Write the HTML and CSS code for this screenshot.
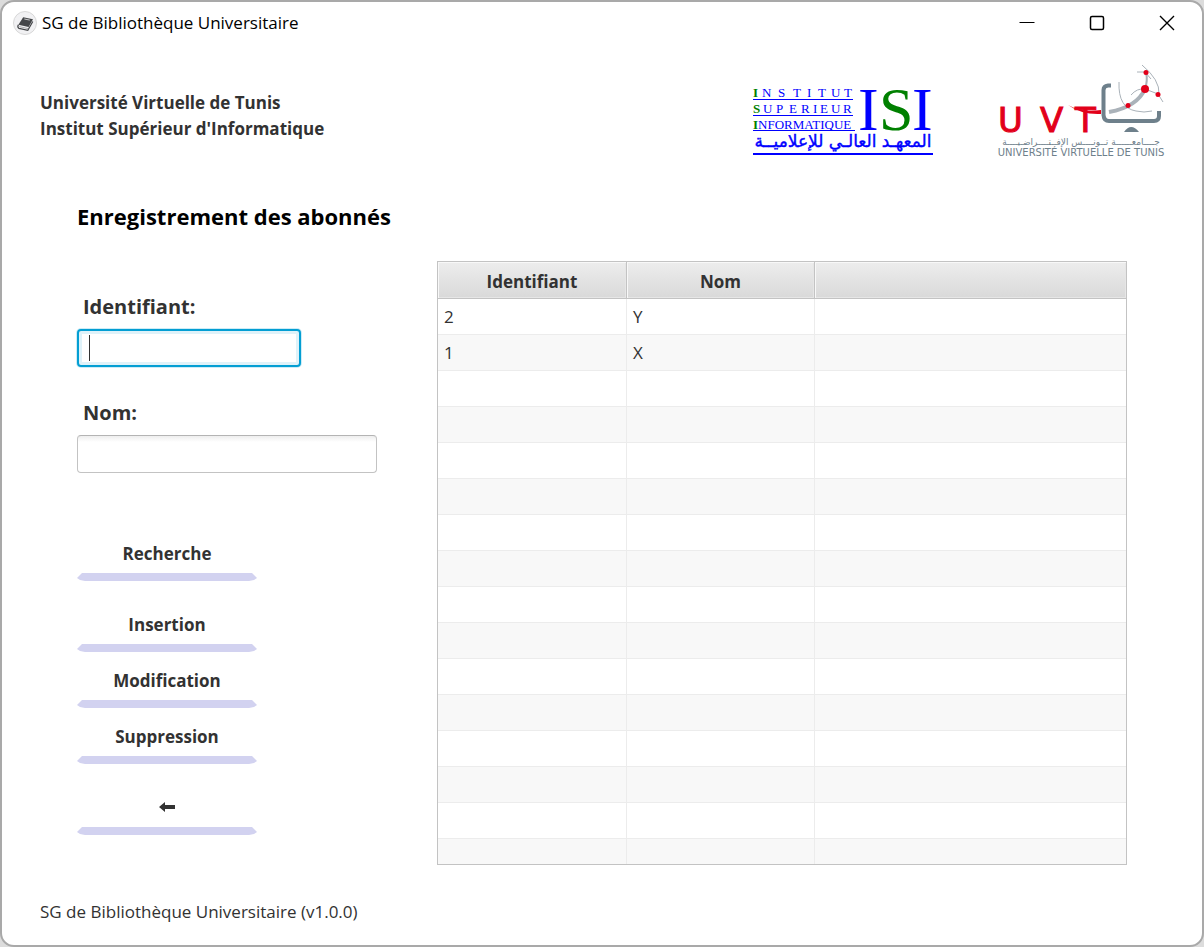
FILE: index.html
```html
<!DOCTYPE html>
<html lang="fr">
<head>
<meta charset="utf-8">
<meta name="viewport" content="width=device-width, initial-scale=1">
<title>SG de Bibliothèque Universitaire</title>
<link rel="stylesheet" href="styles.css">
</head>
<body>
<div class="window">
  <div class="titlebar">
    <svg class="app-icon" viewBox="0 0 24 24" aria-hidden="true">
      <circle cx="12" cy="12" r="11.5" fill="#f1f1f3" stroke="#d8d8d8"/>
      <path d="M10.2 6.2 20 8.2 15.6 16 5.4 13.8z" fill="#45474a"/>
      <path d="M11.3 8 16.8 9.1" stroke="#c4c4c6" fill="none"/>
      <path d="M5.4 13.8Q4 16.2 6 17.4L14.8 19.4 19.8 10.5" fill="none" stroke="#45474a" stroke-width="1.2"/>
      <path d="M6.3 15.6 15 17.6" stroke="#9a9a9c" stroke-width=".8"/>
    </svg>
    <span class="app-name">SG de Bibliothèque Universitaire</span>
    <div class="controls">
      <button class="control" type="button" aria-label="Réduire"><svg viewBox="0 0 16 16"><path d="M.5 7.500H15.500"/></svg></button>
      <button class="control" type="button" aria-label="Agrandir"><svg viewBox="0 0 16 16"><rect x="1.500" y="1.500" width="13" height="13" rx="1.500" stroke-width="1.500"/></svg></button>
      <button class="control" type="button" aria-label="Fermer"><svg viewBox="0 0 16 16"><path d="M1 1 15 15M15 1 1 15" stroke-width="1.400"/></svg></button>
    </div>
  </div>

  <header class="header">
    <p class="school">Université Virtuelle de Tunis<br>Institut Supérieur d'Informatique</p>
    <svg class="logo-isi" viewBox="0 0 182 74" role="img" aria-label="Institut Supérieur Informatique">
      <g class="isi-lines">
        <text y="14" x="2 11 27 42 56 67 80 93"><tspan class="green">I</tspan>NSTITUT</text>
        <text y="30" x="2 12 25 38 50 62 69 80 92"><tspan class="green">S</tspan>UPERIEUR</text>
        <text y="46" x="2"><tspan class="green">I</tspan>NFORMATIQUE</text>
        <path d="M2 16.500H102M2 32.500H102M2 47.500H104" stroke="#0000ff"/>
      </g>
      <text class="isi-big" y="47" x="107 128 161">I<tspan class="big-s">S</tspan>I</text>
      <text class="isi-arabic" x="92" y="64" text-anchor="middle">المعهـد العالـي للإعلاميــة</text>
      <path d="M2 71H182" stroke="#0000ff" stroke-width="2"/>
    </svg>
    <svg class="logo-uvt" viewBox="0 0 166 92" role="img" aria-label="Université Virtuelle de Tunis">
      <text class="uvt-name" y="66" x="0 42 77">UVT</text>
      <path d="M70 39Q84 47 103 44V48Q84 49 70 39z" fill="#e2001a"/>
      <path d="M113 19.500H110Q105.500 20 105.500 24V49Q106 55 111 55H156Q161 55 161 50V45" fill="none" stroke="#6e808b" stroke-width="4"/>
      <path d="M126 66Q133 56 141 66z" fill="#6e808b"/>
      <g fill="none" stroke="#aab2b9">
        <path d="M111 46Q139 41 147 23" stroke-width="4"/>
        <path d="M147 23Q150 14 148 7" stroke-width="2"/>
        <path d="M121 16Q120 42 138 45 146 47 154 45M144 -1Q162 14 161 28M133 29Q139 22 147 23M139 6H147L153 13M147 23 160 28 165 36"/>
      </g>
      <g fill="#e2001a">
        <circle cx="147" cy="23" r="4"/><circle cx="148" cy="6.500" r="2.500"/><circle cx="160" cy="28.500" r="2.500"/><circle cx="130" cy="39.500" r="2.500"/>
      </g>
      <text class="uvt-arabic" x="83" y="79" text-anchor="middle">جــــامعــــــة تــونــــس الإفــتــــراضـيــــة</text>
      <text class="uvt-small" x="83" y="90" text-anchor="middle">UNIVERSITÉ VIRTUELLE DE TUNIS</text>
    </svg>
  </header>

  <main class="main">
    <h1 class="title">Enregistrement des abonnés</h1>
    <form class="form">
      <label class="label" for="ident">Identifiant:</label>
      <div class="field-wrap">
        <input class="field field-active" id="ident" type="text">
        <span class="caret"></span>
      </div>
      <label class="label" for="nom">Nom:</label>
      <input class="field" id="nom" type="text">
      <div class="actions">
        <button class="action" type="button">Recherche</button>
        <div class="action-group">
          <button class="action" type="button">Insertion</button>
          <button class="action" type="button">Modification</button>
          <button class="action" type="button">Suppression</button>
        </div>
        <button class="action" type="button" aria-label="Retour">
          <svg class="arrow" viewBox="0 0 16 10"><path d="M0 5 6 0V3H16V7H6V10z"/></svg>
        </button>
      </div>
    </form>
    <table class="table">
      <thead><tr><th class="col">Identifiant</th><th class="col">Nom</th><th></th></tr></thead>
      <tbody>
        <tr><td>2</td><td>Y</td><td></td></tr>
        <tr><td>1</td><td>X</td><td></td></tr>
        <tr><td></td><td></td><td></td></tr>
        <tr><td></td><td></td><td></td></tr>
        <tr><td></td><td></td><td></td></tr>
        <tr><td></td><td></td><td></td></tr>
        <tr><td></td><td></td><td></td></tr>
        <tr><td></td><td></td><td></td></tr>
        <tr><td></td><td></td><td></td></tr>
        <tr><td></td><td></td><td></td></tr>
        <tr><td></td><td></td><td></td></tr>
        <tr><td></td><td></td><td></td></tr>
        <tr><td></td><td></td><td></td></tr>
        <tr><td></td><td></td><td></td></tr>
        <tr><td></td><td></td><td></td></tr>
        <tr class="cut"><td></td><td></td><td></td></tr>
      </tbody>
    </table>
  </main>
  <footer class="footer">SG de Bibliothèque Universitaire (v1.0.0)</footer>
</div>
</body>
</html>
```
FILE: styles.css
```css
* { box-sizing: border-box; }
body {
  margin: 0;
  background: #dcdcdc;
  color: #323232;
  font: 17px/26px "Open Sans", "Noto Sans", sans-serif;
}
button, input { font: inherit; color: inherit; }
.window {
  min-height: 100vh;
  display: flex;
  flex-direction: column;
  background: #fff;
  border: 2px solid #a9a9a9;
  border-radius: 14px;
}
.titlebar {
  display: flex;
  align-items: center;
  height: 42px;
  padding-left: 11px;
  color: #000;
}
.app-icon { width: 24px; height: 24px; margin-right: 5px; }
.controls { display: flex; margin-left: auto; }
.control {
  width: 70px;
  height: 42px;
  padding: 0;
  border: 0;
  background: none;
}
.control svg {
  display: block;
  width: 16px;
  height: 16px;
  margin: auto;
  fill: none;
  stroke: #000;
}
.header {
  display: flex;
  align-items: flex-start;
  padding: 22px 38px 0;
}
.school {
  margin: 24px auto 0 0;
  font-weight: 700;
}
.logo-isi { width: 182px; height: 74px; margin: 17px 65px 0 0; overflow: visible; }
.logo-uvt { width: 166px; height: 92px; overflow: visible; }
.logo-isi text { fill: #0000ff; }
.logo-isi .green { fill: #008000; font-weight: 700; }
.logo-isi .big-s { fill: #008000; }
.isi-lines { font: 13px "Liberation Serif", serif; }
.isi-big { font: 62px "Liberation Serif", serif; }
.isi-arabic { font: 17px "DejaVu Sans", sans-serif; stroke: #0000ff; stroke-width: .4; }
.uvt-name { font: 34px "DejaVu Sans", sans-serif; fill: #e2001a; stroke: #e2001a; }
.uvt-arabic { font: 9px "DejaVu Sans", sans-serif; fill: #6e808b; }
.uvt-small { font: 10px "DejaVu Sans", sans-serif; fill: #6e808b; }
.main {
  display: grid;
  grid-template-columns: 300px 1fr;
  column-gap: 60px;
  padding: 41px 75px 0;
}
.title {
  grid-column: 1 / -1;
  margin: 0 0 28px;
  color: #000;
  font-size: 22px;
  line-height: 34px;
}
.form { display: flex; flex-direction: column; align-items: flex-start; }
.label {
  padding: 31px 6px 0;
  font-size: 20px;
  font-weight: 700;
  line-height: 30px;
  margin-bottom: 7px;
}
.field-wrap { position: relative; }
.field {
  display: block;
  width: 300px;
  height: 38px;
  padding: 0 10px;
  border: 1px solid #c3c3c3;
  border-top-color: #b4b4b4;
  border-radius: 4px;
  background: linear-gradient(#eee, #fff 6px);
  outline: 0;
}
.field-active {
  width: 224px;
  border: 2px solid #039ed3;
  background: #fff;
  box-shadow: 0 0 0 1px #cdecf6, inset 0 0 0 3px #dff2f9;
}
.caret {
  position: absolute;
  left: 12px;
  top: 6px;
  width: 1px;
  height: 26px;
  background: #323232;
}
.actions {
  display: flex;
  flex-direction: column;
  gap: 25px;
  margin-top: 62px;
}
.action-group { display: flex; flex-direction: column; gap: 10px; }
.action {
  display: flex;
  flex-direction: column;
  justify-content: flex-end;
  align-items: center;
  width: 180px;
  height: 46px;
  padding: 0;
  border: 0;
  background: none;
  font-weight: 700;
}
.action::after {
  content: "";
  width: 100%;
  height: 8px;
  margin-top: 6px;
  background: #d2d2f0;
  clip-path: polygon(5px 0, calc(100% - 5px) 0, 100% 5px, calc(100% - 3px) 7px, calc(100% - 8px) 8px, 8px 8px, 3px 7px, 0 5px);
}
.arrow { width: 16px; height: 10px; margin-bottom: 9px; fill: #323232; }
.table {
  width: 100%;
  table-layout: fixed;
  border-collapse: separate;
  border-spacing: 0;
  border: 1px solid #c3c3c3;
}
.col { width: 188px; }
.col:first-child { width: 189px; }
.table th {
  height: 37px;
  padding: 4px 0 0;
  border: solid #c3c3c3;
  border-width: 0 1px 1px 0;
  background: linear-gradient(#ededed, #d9d9d9);
  box-shadow: inset 1px 1px #f8f8f8, inset -1px -1px #e6e6e6;
}
.table td {
  height: 36px;
  padding: 0 5px 0 6px;
  border: solid #ececec;
  border-width: 0 1px 1px 0;
}
.table th:last-child, .table td:last-child { border-right: 0; }
.table tr:nth-child(even) td { background: #f8f8f8; }
.table .cut td { height: 25px; border-bottom: 0; }
.footer { margin-top: auto; padding: 24px 38px 20px; }
```
